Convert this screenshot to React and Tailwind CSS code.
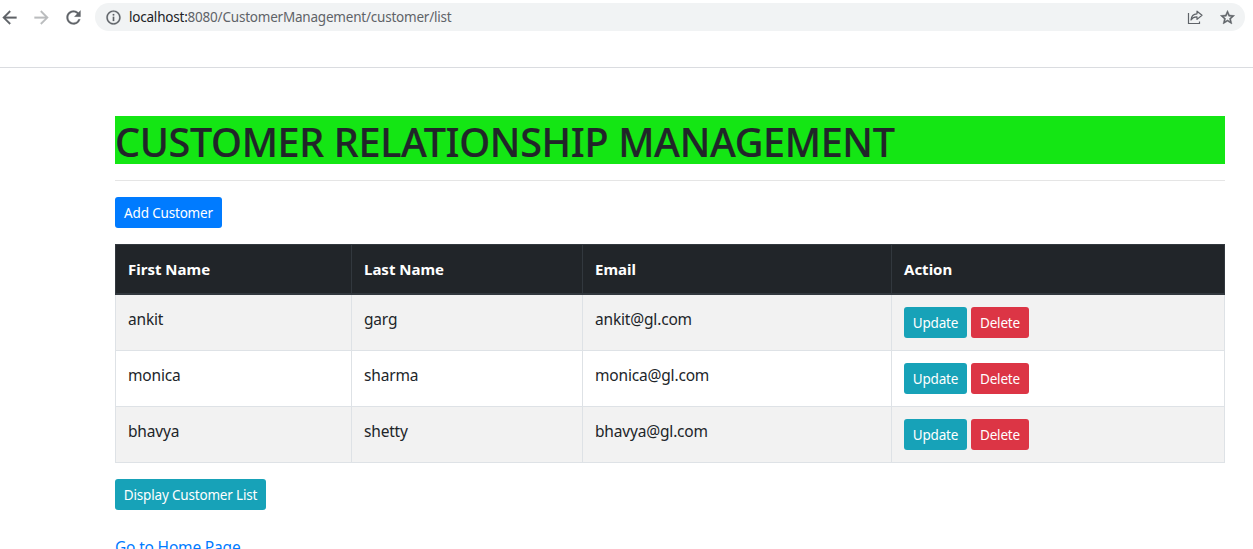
import React from "react";

const customers = [
  { first: "ankit", last: "garg", email: "ankit@gl.com" },
  { first: "monica", last: "sharma", email: "monica@gl.com" },
  { first: "bhavya", last: "shetty", email: "bhavya@gl.com" },
];

const icons = {
  back: "M20 11H7.83l5.59-5.59L12 4l-8 8 8 8 1.41-1.41L7.83 13H20v-2z",
  forward: "M12 4l-1.41 1.41L16.17 11H4v2h12.17l-5.58 5.59L12 20l8-8z",
  reload: "M17.65 6.35A7.958 7.958 0 0 0 12 4c-4.42 0-7.99 3.58-7.99 8s3.57 8 7.99 8c3.73 0 6.84-2.55 7.73-6h-2.08A5.99 5.99 0 0 1 12 18c-3.31 0-6-2.69-6-6s2.69-6 6-6c1.66 0 3.14.69 4.22 1.78L13 11h7V4l-2.35 2.35z",
  info: "M11 7h2v2h-2zm0 4h2v6h-2zm1-9C6.48 2 2 6.48 2 12s4.48 10 10 10 10-4.48 10-10S17.52 2 12 2zm0 18c-4.41 0-8-3.59-8-8s3.59-8 8-8 8 3.59 8 8-3.59 8-8 8z",
  star: "M22 9.24l-7.19-.62L12 2 9.19 8.63 2 9.24l5.46 4.73L5.82 21 12 17.27 18.18 21l-1.63-7.03L22 9.24zM12 15.4l-3.76 2.27 1-4.28-3.32-2.88 4.38-.38L12 6.1l1.71 4.04 4.38.38-3.32 2.88 1 4.28L12 15.4z",
};

function Icon({ name, className }) {
  return (
    <svg viewBox="0 0 24 24" className={`shrink-0 fill-current stroke-current ${className}`}>
      <path d={icons[name]} />
    </svg>
  );
}

function Button({ className, children }) {
  return (
    <button className={`flex h-[31px] shrink-0 items-center justify-center whitespace-nowrap rounded-[3px] pt-0.5 text-[13.5px] leading-[21px] text-white ${className}`}>
      {children}
    </button>
  );
}

function ShareIcon() {
  return (
    <svg width="16" height="16" viewBox="0 0 16 16" fill="none" stroke="#5f6368" strokeWidth="1.2" className="shrink-0">
      <path d="M1.5 4V14.5H12.5V12.5" />
      <path d="M4 11C4.3 7.2 6.2 5 10 4.8V2.2L15 6.3L10 10.4V7.9C7.2 7.8 5.4 8.7 4 11Z" strokeLinejoin="round" />
    </svg>
  );
}

function BrowserBar() {
  return (
    <header className="flex h-[68px] items-start border-b border-[#dadce0]">
      <div className="flex h-[34px] w-[95px] shrink-0 items-center text-[#5f6368]">
        <Icon name="back" className="-ml-[1.5px] size-[21px] stroke-[0.3]" />
        <Icon name="forward" className="ml-[11px] size-[21px] stroke-[0.3] text-[#babcbe]" />
        <Icon name="reload" className="ml-[11px] size-[21px] stroke-[0.3]" />
      </div>
      <div className="mt-[3px] flex h-7 w-[1150px] items-center rounded-full bg-[#f1f3f4] pl-[9.5px] pr-[9.5px] text-[#5f6368]">
        <Icon name="info" className="size-[17px] stroke-[0.3]" />
        <span className="ml-[7.5px] grow text-[13.5px] tracking-[-0.21px]">
          <span className="text-[#202124]">localhost:</span>8080/CustomerManagement/customer/list
        </span>
        <ShareIcon />
        <Icon name="star" className="ml-[15.5px] size-[17px] stroke-[0.7]" />
      </div>
    </header>
  );
}

export default function App() {
  return (
    <div className="h-[549px] w-[1253px] overflow-hidden bg-white font-['Noto_Sans',sans-serif] text-[15.5px] leading-6 tracking-[-0.18px] text-[#212529]">
      <BrowserBar />
      <main className="ml-[115px] w-[1110px] pt-12">
        <h1 className="h-12 whitespace-nowrap bg-[#14e614] text-[39.5px] font-medium leading-[52px] tracking-[-0.33px] [-webkit-text-stroke:0.2px_#212529]">
          CUSTOMER RELATIONSHIP MANAGEMENT
        </h1>
        <hr className="my-4 border-[#e5e5e5]" />
        <Button className="w-[107px] bg-[#007bff]">Add Customer</Button>
        <table className="mt-4 w-[1110px] table-fixed border-collapse">
          <colgroup>
            <col className="w-[236px]" />
            <col className="w-[231px]" />
            <col className="w-[309px]" />
            <col className="w-[333px]" />
          </colgroup>
          <thead>
            <tr className="h-[49px] bg-[#212529] text-left text-[15px] tracking-normal text-white">
              {["First Name", "Last Name", "Email", "Action"].map((h) => (
                <th key={h} className="border border-b-2 border-[#32383e] px-3 pt-px font-bold">{h}</th>
              ))}
            </tr>
          </thead>
          <tbody>
            {customers.map((c) => (
              <tr key={c.first} className="h-14 align-top odd:bg-[#f2f2f2]">
                <td className="border border-[#dee2e6] px-3 pt-3">{c.first}</td>
                <td className="border border-[#dee2e6] px-3 pt-3">{c.last}</td>
                <td className="border border-[#dee2e6] px-3 pt-3">{c.email}</td>
                <td className="border border-[#dee2e6] p-3">
                  <div className="flex gap-1">
                    <Button className="w-[63px] bg-[#17a2b8]">Update</Button>
                    <Button className="w-[58px] bg-[#dc3545]">Delete</Button>
                  </div>
                </td>
              </tr>
            ))}
          </tbody>
        </table>
        <Button className="mt-4 w-[151px] bg-[#17a2b8]">Display Customer List</Button>
        <a className="mt-[25px] inline-block text-[#007bff]">Go to Home Page</a>
      </main>
    </div>
  );
}
